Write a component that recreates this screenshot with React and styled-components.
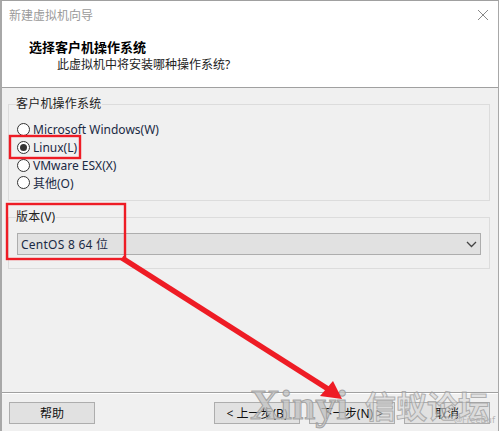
import React from 'react';
import styled, { createGlobalStyle } from 'styled-components';

const Global = createGlobalStyle`
  html, body { margin: 0; padding: 0; background: #fff; }
  * { box-sizing: border-box; }
`;

const Win = styled.div`
  position: relative;
  width: 499px;
  height: 431px;
  overflow: hidden;
  display: flex;
  flex-direction: column;
  background: #f0f0f0;
  border-top: 1px solid #a0a0a0;
  border-left: 2px solid #a8a8a8;
  border-right: 1px solid #a8a8a8;
  font-family: "Noto Sans", "Noto Sans CJK SC", sans-serif;
  font-size: 12px;
  color: #111;
`;

const Header = styled.header`
  height: 87px;
  background: #fff;
  border-bottom: 1px solid #a0a0a0;
  display: flex;
  flex-direction: column;
  padding: 7px 0 0 7px;
  position: relative;
  flex: none;
`;

const Title = styled.div`
  color: #9a9a9a;
  font-size: 12px;
  line-height: 15px;
`;

const Close = styled.svg`
  position: absolute;
  right: 10px;
  top: 9px;
  width: 10px;
  height: 10px;
`;

const Heading = styled.div`
  font-weight: 700;
  margin: 16px 0 0 20px;
  line-height: 16px;
  font-size: 13px;
  color: #000;
`;

const Sub = styled.div`
  margin: 2px 0 0 48px;
  line-height: 16px;
  color: #222;
`;

const Content = styled.main`
  flex: 1;
  display: flex;
  flex-direction: column;
  padding: 9px 8px 0 6px;
  gap: 9px;
`;

const Group = styled.fieldset`
  margin: 0;
  padding: 0;
  border: 1px solid #dcdcdc;
  height: ${p => p.$h}px;
  flex: none;
  position: relative;
`;

const Legend = styled.legend`
  margin-left: 7px;
  padding: 0 1px 0 0;
  font-size: 12px;
  line-height: 14px;
  letter-spacing: 0.2px;
  color: #222;
`;

const Radios = styled.div`
  display: flex;
  flex-direction: column;
  padding: 10px 0 0 8px;
`;

const RadioRow = styled.div`
  display: flex;
  align-items: center;
  height: 17.7px;
  gap: 3px;
  color: #1a2a44;
`;

const RadioDot = styled.span`
  width: 13px;
  height: 13px;
  border-radius: 50%;
  border: 1px solid #333;
  background: #fff;
  display: flex;
  align-items: center;
  justify-content: center;
  flex: none;
  &::after {
    content: "";
    width: 7px;
    height: 7px;
    border-radius: 50%;
    background: ${p => (p.$on ? '#333' : 'transparent')};
  }
`;

const Select = styled.div`
  margin: 9px 8px 0 8px;
  height: 22px;
  background: #e1e1e1;
  border: 1px solid #adadad;
  display: flex;
  align-items: center;
  justify-content: space-between;
  padding: 0 3px 0 3px;
  letter-spacing: 0.25px;
  color: #1a2a44;
`;

const Footer = styled.footer`
  margin-top: auto;
  height: 39px;
  flex: none;
  border-top: 1px solid #a0a0a0;
  box-shadow: inset 0 1px 0 #fff;
  display: flex;
  align-items: flex-start;
  padding: 9px 7px 0 7px;
`;

const Btn = styled.div`
  width: 86px;
  height: 22px;
  border: 1px solid #adadad;
  background: #e1e1e1;
  display: flex;
  align-items: center;
  justify-content: center;
  color: #111;
  margin-left: ${p => p.$ml || 0}px;
`;

const Arrow = styled.svg`
  position: absolute;
  left: -2px;
  top: -1px;
  width: 499px;
  height: 431px;
  pointer-events: none;
`;

const Watermark = styled.div`
  position: absolute;
  left: 248px;
  top: 380px;
  height: 48px;
  display: flex;
  align-items: center;
  gap: 17px;
  white-space: nowrap;
  font-weight: 700;
  pointer-events: none;
`;

const MarkLatin = styled.span`
  font-family: "Liberation Serif", serif;
  font-size: 42px;
  line-height: 48px;
  color: rgba(195, 195, 195, 0.8);
  -webkit-text-stroke: 1px rgba(150, 150, 150, 0.8);
`;

const MarkCjk = styled.span`
  font-family: "Noto Sans CJK SC", sans-serif;
  font-size: 31px;
  line-height: 48px;
  color: rgba(215, 215, 215, 0.55);
  -webkit-text-stroke: 1px rgba(150, 150, 150, 0.7);
`;

const Credit = styled.div`
  position: absolute;
  right: 3px;
  bottom: 6px;
  font-size: 9px;
  line-height: 11px;
  color: #b5b5b5;
  pointer-events: none;
`;

export default function App() {
  return (
    <Win>
      <Global />
      <Header>
        <Title>新建虚拟机向导</Title>
        <Close viewBox="0 0 10 10"><path d="M0 0L10 10M10 0L0 10" stroke="#888" strokeWidth="1" fill="none" /></Close>
        <Heading>选择客户机操作系统</Heading>
        <Sub>此虚拟机中将安装哪种操作系统?</Sub>
      </Header>
      <Content>
        <Group $h={104}>
          <Legend>客户机操作系统</Legend>
          <Radios>
            <RadioRow><RadioDot />Microsoft Windows(W)</RadioRow>
            <RadioRow><RadioDot $on />Linux(L)</RadioRow>
            <RadioRow><RadioDot />VMware ESX(X)</RadioRow>
            <RadioRow><RadioDot />其他(O)</RadioRow>
          </Radios>
        </Group>
        <Group $h={59}>
          <Legend>版本(V)</Legend>
          <Select>
            <span>CentOS 8 64 位</span>
            <svg width="11" height="7" viewBox="0 0 11 7"><path d="M1 1L5.5 5.5L10 1" stroke="#444" strokeWidth="1.3" fill="none" /></svg>
          </Select>
        </Group>
      </Content>
      <Footer>
        <Btn>帮助</Btn>
        <Btn $ml={119}>&lt; 上一步(B)</Btn>
        <Btn $ml={9}>下一步(N) &gt;</Btn>
        <Btn $ml={9}>取消</Btn>
      </Footer>
      <Watermark>
        <MarkLatin>Xinyi</MarkLatin>
        <MarkCjk>信蚁论坛</MarkCjk>
      </Watermark>
      <Credit>@FreeBuf</Credit>
      <Arrow viewBox="0 0 499 431">
        <rect x="10" y="136" width="70" height="22" fill="none" stroke="#ee1c25" strokeWidth="2.4" />
        <rect x="7" y="204" width="118" height="55" fill="none" stroke="#ee1c25" strokeWidth="2.4" />
        <path d="M122 258L328 389" stroke="#ee1c25" strokeWidth="5.5" fill="none" />
        <path d="M342 399L320 396L333 381Z" fill="#ee1c25" />
      </Arrow>
    </Win>
  );
}
